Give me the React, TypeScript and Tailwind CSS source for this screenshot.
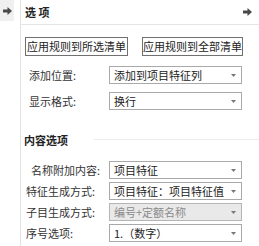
import React from "react";

const Arrow = () => (
  <svg width="9" height="8" viewBox="0 0 9 8">
    <path d="M0 2.5h4.5V0L9 4 4.5 8V5.5H0z" fill="#4a4a4a" />
  </svg>
);

const Caret = () => (
  <svg width="5" height="3" viewBox="0 0 5 3">
    <path d="M0 0h5L2.5 3z" fill="#777" />
  </svg>
);

function Select({ value, disabled }: { value: string; disabled?: boolean }) {
  return (
    <div
      className={
        disabled
          ? "w-[133px] h-[18px] border border-[#b5b5b5] bg-[#e9e9e9] text-[#8a8a8a] flex items-center justify-between pl-[4px] pr-[5px]"
          : "w-[133px] h-[18px] border border-[#a9a9a9] bg-white text-[#222] flex items-center justify-between pl-[4px] pr-[5px]"
      }
    >
      <span className="leading-none whitespace-nowrap">{value}</span>
      <Caret />
    </div>
  );
}

function Row({ label, value, disabled, pl }: { label: string; value: string; disabled?: boolean; pl: string }) {
  return (
    <div className="flex items-center">
      <div className={"w-[88px] text-[#333] whitespace-nowrap " + pl}>{label}</div>
      <Select value={value} disabled={disabled} />
    </div>
  );
}

export default function App() {
  return (
    <div className="flex w-[259px] h-[246px] bg-white text-[11px] leading-none font-['Noto_Sans_CJK_SC',sans-serif] overflow-hidden">
      <div className="w-[21px] shrink-0 border-r border-[#e2e2e2]">
        <div className="w-[14px] h-[21px] bg-[#f0f0f0] flex items-center justify-center">
          <Arrow />
        </div>
      </div>
      <div className="flex-1 flex flex-col">
        <div className="h-[25px] border-b border-[#e6e6e6] flex items-center justify-between pl-[4px] pr-[7px]">
          <span className="font-bold text-[#222]">选 项</span>
          <Arrow />
        </div>
        <div className="flex gap-[14px] pl-[4px] mt-[12px]">
          <div className="w-[103px] h-[19px] border border-[#707070] flex items-center justify-center text-[#222] whitespace-nowrap">
            应用规则到所选清单
          </div>
          <div className="w-[101px] h-[19px] border border-[#707070] flex items-center justify-center text-[#222] whitespace-nowrap">
            应用规则到全部清单
          </div>
        </div>
        <div className="flex flex-col gap-[8px] mt-[10px]">
          <Row label="添加位置:" value="添加到项目特征列" pl="pl-[8px]" />
          <Row label="显示格式:" value="换行" pl="pl-[8px]" />
        </div>
        <div className="flex items-center mt-[25px] pl-[3px]">
          <span className="font-bold text-[#222]">内容选项</span>
          <div className="flex-1 h-px bg-[#ececec] ml-[26px] -mt-[2px]" />
        </div>
        <div className="flex flex-col gap-[3px] mt-[15px]">
          <Row label="名称附加内容:" value="项目特征" pl="pl-[10px]" />
          <Row label="特征生成方式:" value="项目特征：项目特征值" pl="pl-[5px]" />
          <Row label="子目生成方式:" value="编号+定额名称" disabled pl="pl-[5px]" />
          <Row label="序号选项:" value="1.（数字）" pl="pl-[5px]" />
        </div>
      </div>
    </div>
  );
}
